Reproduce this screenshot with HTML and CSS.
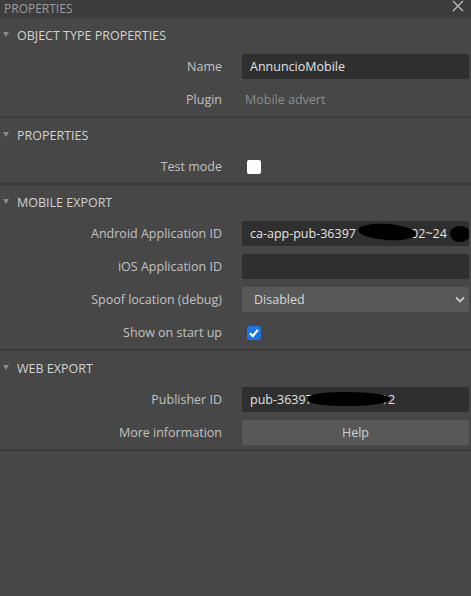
FILE: index.html
```html
<!DOCTYPE html>
<html>
<head>
<meta charset="utf-8">
<link rel="stylesheet" href="styles.css">
</head>
<body>
<div class="panel">
  <div class="titlebar">
    <span class="title">PROPERTIES</span>
    <svg class="close" width="12" height="12" viewBox="0 0 12 12"><path d="M1 1 L11 11 M11 1 L1 11" stroke="#bdbdbd" stroke-width="1.3" fill="none"/></svg>
  </div>

  <div class="section">
    <div class="head"><span class="tri"></span>OBJECT TYPE PROPERTIES</div>
    <div class="row"><div class="label">Name</div><div class="value"><div class="input">AnnuncioMobile</div></div></div>
    <div class="row"><div class="label">Plugin</div><div class="value"><span class="static">Mobile advert</span></div></div>
  </div>

  <div class="section">
    <div class="head"><span class="tri"></span>PROPERTIES</div>
    <div class="row"><div class="label">Test mode</div><div class="value"><span class="check"></span></div></div>
  </div>

  <div class="section">
    <div class="head"><span class="tri"></span>MOBILE EXPORT</div>
    <div class="row"><div class="label">Android Application ID</div><div class="value"><div class="input redact-wrap">ca-app-pub-36397<span class="gap1"></span>402~24<span class="blob b1"></span><span class="blob b2"></span></div></div></div>
    <div class="row"><div class="label">iOS Application ID</div><div class="value"><div class="input"></div></div></div>
    <div class="row"><div class="label">Spoof location (debug)</div><div class="value"><div class="select"><span>Disabled</span><svg width="10" height="7" viewBox="0 0 10 7"><path d="M1 1.5 L5 5.5 L9 1.5" stroke="#c8c8c8" stroke-width="1.8" fill="none"/></svg></div></div></div>
    <div class="row"><div class="label">Show on start up</div><div class="value"><span class="check on"><svg width="14" height="14" viewBox="0 0 14 14"><path d="M3 7.2 L5.8 10 L11 3.8" stroke="#fff" stroke-width="2.2" fill="none"/></svg></span></div></div>
  </div>

  <div class="section">
    <div class="head"><span class="tri"></span>WEB EXPORT</div>
    <div class="row"><div class="label">Publisher ID</div><div class="value"><div class="input redact-wrap">pub-36397<span class="gap2"></span>12<span class="blob b3"></span></div></div></div>
    <div class="row"><div class="label">More information</div><div class="value"><div class="button">Help</div></div></div>
  </div>
</div>
</body>
</html>
```
FILE: styles.css
```css
html, body {
  margin: 0;
  padding: 0;
  background: #474747;
}
body {
  width: 471px;
  height: 596px;
  overflow: hidden;
  font-family: "Open Sans", "Noto Sans", sans-serif;
  font-size: 12.5px;
}
.titlebar {
  height: 18px;
  background: #3d3d3d;
  display: flex;
  align-items: center;
  justify-content: space-between;
  padding: 0 7px 0 4px;
}
.title {
  color: #9c9c9c;
  font-size: 12px;
  line-height: 17px;
  margin-top: -2px;
}
.close {
  display: block;
  margin-top: -6px;
}
.section {
  border-bottom: 2px solid #3b3b3b;
}
.head {
  height: 32px;
  display: flex;
  align-items: center;
  color: #d2d2d2;
  font-size: 12.5px;
  padding-left: 3px;
  padding-top: 2px;
  box-sizing: border-box;
}
.tri {
  width: 0;
  height: 0;
  border-left: 3.5px solid transparent;
  border-right: 3.5px solid transparent;
  border-top: 5px solid #8a8a8a;
  margin-right: 8px;
  margin-top: -2px;
}
.row {
  height: 33px;
  display: grid;
  grid-template-columns: 222px 1fr;
  column-gap: 20px;
  align-items: center;
  padding-right: 2px;
}
.label {
  text-align: right;
  color: #c2c2c2;
}
.value {
  display: flex;
  align-items: center;
}
.input {
  position: relative;
  flex: 1;
  height: 25px;
  line-height: 25px;
  background: #2f2f2f;
  border-radius: 2px;
  padding-left: 8px;
  color: #e2e2e2;
  font-size: 12.5px;
  white-space: nowrap;
  overflow: hidden;
}
.static {
  color: #8c8c8c;
  padding-left: 3px;
}
.check {
  width: 14px;
  height: 14px;
  margin-left: 5px;
  background: #ffffff;
  border-radius: 2px;
  display: flex;
}
.check.on {
  background: #1a74e6;
}
.select {
  flex: 1;
  height: 25px;
  background: #585858;
  border-radius: 2px;
  display: flex;
  align-items: center;
  justify-content: space-between;
  padding: 0 4px 0 12px;
  color: #d6d6d6;
  font-size: 12.5px;
}
.button {
  flex: 1;
  height: 25px;
  line-height: 25px;
  background: #585858;
  border-radius: 2px;
  text-align: center;
  color: #cfcfcf;
  font-size: 12.5px;
}
.gap1 {
  display: inline-block;
  width: 48px;
}
.gap2 {
  display: inline-block;
  width: 68px;
}
.blob {
  position: absolute;
  background: #000;
  border-radius: 50%;
}
.b1 {
  left: 116px;
  top: 3px;
  width: 58px;
  height: 16px;
  transform: rotate(4deg);
}
.b2 {
  left: 208px;
  top: 5px;
  width: 20px;
  height: 16px;
}
.b3 {
  left: 66px;
  top: 5px;
  width: 82px;
  height: 14px;
  border-radius: 40% 50% 50% 40%;
}
```
